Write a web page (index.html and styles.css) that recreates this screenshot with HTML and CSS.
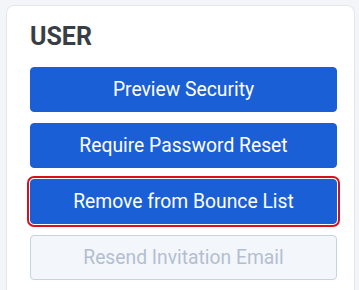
FILE: index.html
```html
<!DOCTYPE html>
<html lang="en">
<head>
  <meta charset="UTF-8">
  <meta name="viewport" content="width=device-width, initial-scale=1.0">
  <title>User actions</title>
  <link rel="stylesheet" href="styles.css">
</head>
<body>
  <div class="panel">
    <h2 class="panel-title">USER</h2>
    <div class="actions">
      <button class="btn">Preview Security</button>
      <button class="btn">Require Password Reset</button>
      <button class="btn focused">Remove from Bounce List</button>
      <button class="btn" disabled>Resend Invitation Email</button>
    </div>
  </div>
</body>
</html>
```

FILE: styles.css
```css
*, *::before, *::after { box-sizing: border-box; }
body { margin: 0; padding: 5px 4px 0 6px; background-color: #f3f5f8; font-family: Roboto, "Liberation Sans", Arial, sans-serif; }

.panel { background-color: #fff; border: 1px solid #e4e8ee; border-bottom: 0; border-radius: 8px 8px 0 0; padding: 18px 17px 11px 23px; }
.panel-title { margin: 0 0 18px; font-size: 25px; line-height: 25px; font-weight: 700; color: #393e45; }

/* ボタン */
.actions { display: flex; flex-direction: column; gap: 11px; }
.btn {
  display: block;
  width: 100%;
  height: 45px;
  border: 1px solid #1a5fd6;
  border-radius: 4px;
  background-color: #1a5fd6;
  color: #fff;
  font-family: inherit;
  font-size: 19.3px;
  text-align: center;
  cursor: pointer;
}
.btn.focused { outline: 2px solid #d8101c; outline-offset: 1px; }
.btn:disabled { background-color: #f3f6fa; border-color: #c8d2e0; color: #b3bfd0; cursor: default; }
```
